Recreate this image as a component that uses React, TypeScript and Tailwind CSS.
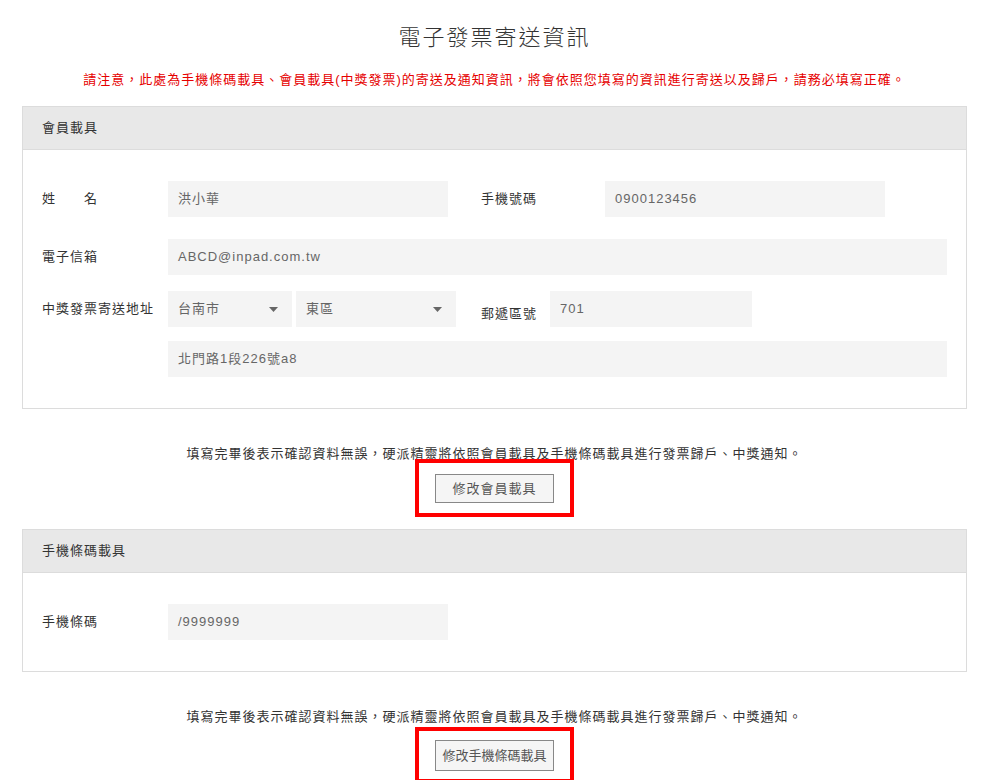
const font = "font-['Liberation_Sans','Noto_Sans_CJK_TC',sans-serif]";

function Field({ value, className }: { value: string; className: string }) {
  return (
    <div className={"flex h-[36px] items-center bg-[#f4f4f4] px-[10px] text-[13px] tracking-[1px] text-[#666] " + className}>
      {value}
    </div>
  );
}

function SelectBox({ value, className }: { value: string; className: string }) {
  return (
    <div className={"flex h-[36px] items-center justify-between bg-[#f4f4f4] pl-[10px] pr-[14px] text-[13px] tracking-[1px] text-[#666] " + className}>
      <span>{value}</span>
      <svg width="9" height="5" viewBox="0 0 9 5">
        <path d="M0 0 L9 0 L4.5 5 Z" fill="#666" />
      </svg>
    </div>
  );
}

function Label({ text, className = "" }: { text: string; className?: string }) {
  return <div className={"shrink-0 text-[13px] tracking-[1px] text-[#333] " + className}>{text}</div>;
}

function Panel({ title, children }: { title: string; children: React.ReactNode }) {
  return (
    <div className="ml-[22px] mr-[16px] border border-[#dcdcdc]">
      <div className="flex h-[42px] items-center bg-[#e8e8e8] px-[19px] text-[13px] tracking-[1px] text-[#333]">{title}</div>
      <div className="border-t border-[#dcdcdc] px-[19px] pb-[31px] pt-[31px]">{children}</div>
    </div>
  );
}

function Confirm({ label, top, bottom, margin }: { label: string; top: string; bottom: string; margin: string }) {
  return (
    <div className="flex flex-col items-center pl-[6px]">
      <p className="h-[20px] text-[13px] leading-[20px] tracking-[1px] text-[#333]">
        填寫完畢後表示確認資料無誤，硬派精靈將依照會員載具及手機條碼載具進行發票歸戶、中獎通知。
      </p>
      <div className={"w-[159px] border-4 border-[#ff0000] px-[16px] " + top + " " + bottom + " " + margin}>
        <button
          type="button"
          className={"flex w-[119px] items-center justify-center whitespace-nowrap border border-[#888] bg-[#f5f5f5] text-[13px] text-[#555] " + (label.length > 6 ? "h-[31px] tracking-[0px]" : "h-[29px] tracking-[1px]")}
        >
          {label}
        </button>
      </div>
    </div>
  );
}

export default function App() {
  return (
    <div className={"min-h-[780px] w-[983px] bg-white pb-[2px] " + font}>
      <h1 className="pl-[6px] pt-[23px] text-center text-[22px] font-light leading-[30px] tracking-[2px] text-[#333]">電子發票寄送資訊</h1>
      <p className="mt-[17px] pl-[6px] text-center text-[13px] leading-[20px] tracking-[1px] text-[#e60000]">
        請注意，此處為手機條碼載具、會員載具(中獎發票)的寄送及通知資訊，將會依照您填寫的資訊進行寄送以及歸戶，請務必填寫正確。
      </p>

      <div className="mt-[16px]">
        <Panel title="會員載具">
          <div className="flex flex-col">
            <div className="flex items-center">
              <Label text="姓　　名" className="w-[126px]" />
              <Field value="洪小華" className="w-[280px]" />
              <Label text="手機號碼" className="ml-[33px] w-[124px]" />
              <Field value="0900123456" className="w-[280px]" />
            </div>
            <div className="mt-[22px] flex items-center">
              <Label text="電子信箱" className="w-[126px]" />
              <Field value="ABCD@inpad.com.tw" className="flex-1" />
            </div>
            <div className="mt-[16px] flex items-center">
              <Label text="中獎發票寄送地址" className="w-[126px]" />
              <SelectBox value="台南市" className="w-[124px]" />
              <SelectBox value="東區" className="ml-[4px] w-[160px]" />
              <Label text="郵遞區號" className="ml-[25px] w-[69px] pt-[9px]" />
              <Field value="701" className="w-[202px]" />
            </div>
            <div className="mt-[14px] flex items-center pl-[126px]">
              <Field value="北門路1段226號a8" className="flex-1" />
            </div>
          </div>
        </Panel>
      </div>

      <div className="mt-[35px]">
        <Confirm label="修改會員載具" top="pt-[11px]" bottom="pb-[10px]" margin="-mt-[5px]" />
      </div>

      <div className="mt-[12px]">
        <Panel title="手機條碼載具">
          <div className="flex items-center">
            <Label text="手機條碼" className="w-[126px]" />
            <Field value="/9999999" className="w-[280px]" />
          </div>
        </Panel>
      </div>

      <div className="mt-[35px]">
        <Confirm label="修改手機條碼載具" top="pt-[9px]" bottom="pb-[8px]" margin="mt-0" />
      </div>
    </div>
  );
}
